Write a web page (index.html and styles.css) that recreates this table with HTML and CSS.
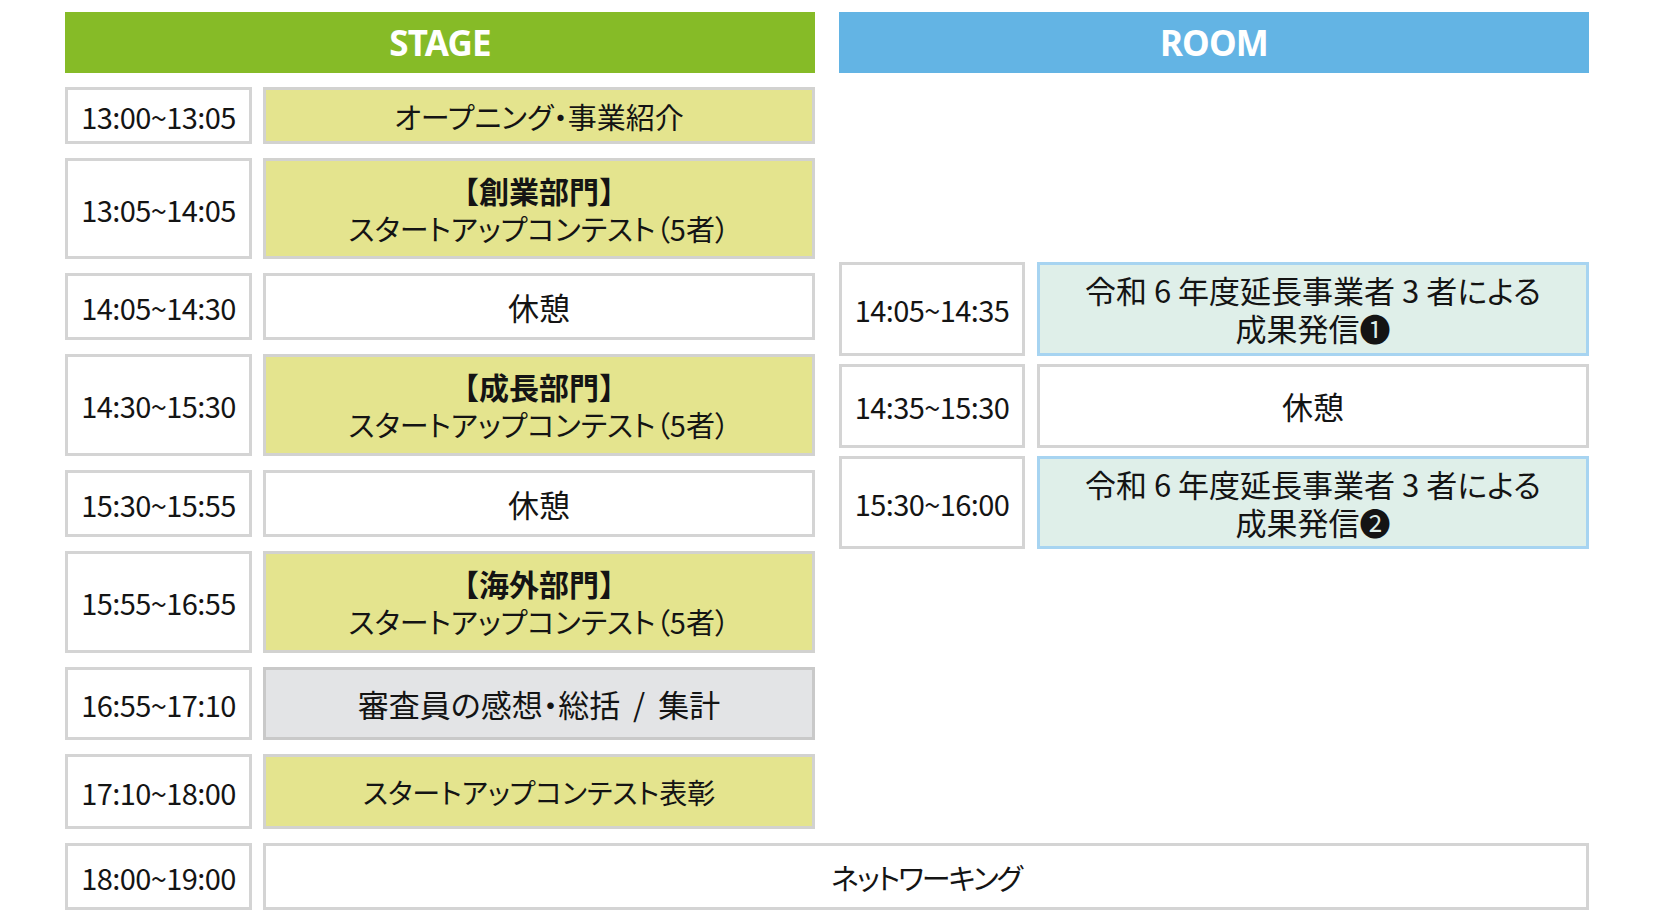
FILE: index.html
```html
<!DOCTYPE html>
<html lang="ja">
<head>
<meta charset="utf-8">
<title>Schedule</title>
<link rel="stylesheet" href="styles.css">
</head>
<body>
<div class="page">
  <div class="columns">
    <section class="col stage">
      <div class="head head-stage">STAGE</div>
      <div class="row h57"><div class="cell time">13:00~13:05</div><div class="cell yellow">オープニング・事業紹介</div></div>
      <div class="row h101"><div class="cell time">13:05~14:05</div><div class="cell yellow"><span class="bold">【創業部門】</span><span>スタートアップコンテスト（5者）</span></div></div>
      <div class="row h67"><div class="cell time">14:05~14:30</div><div class="cell plain kanji">休憩</div></div>
      <div class="row h102"><div class="cell time">14:30~15:30</div><div class="cell yellow"><span class="bold">【成長部門】</span><span>スタートアップコンテスト（5者）</span></div></div>
      <div class="row h67"><div class="cell time">15:30~15:55</div><div class="cell plain kanji">休憩</div></div>
      <div class="row h102"><div class="cell time">15:55~16:55</div><div class="cell yellow"><span class="bold">【海外部門】</span><span>スタートアップコンテスト（5者）</span></div></div>
      <div class="row h73"><div class="cell time">16:55~17:10</div><div class="cell gray">審査員の感想・総括 / 集計</div></div>
      <div class="row h75"><div class="cell time">17:10~18:00</div><div class="cell yellow award">スタートアップコンテスト表彰</div></div>
    </section>
    <section class="col room">
      <div class="head head-room">ROOM</div>
      <div class="room-rows">
        <div class="row room-row h94"><div class="cell time">14:05~14:35</div><div class="cell blue"><span>令和 6 年度延長事業者 3 者による</span><span>成果発信❶</span></div></div>
        <div class="row room-row h84"><div class="cell time">14:35~15:30</div><div class="cell plain kanji">休憩</div></div>
        <div class="row room-row h93"><div class="cell time">15:30~16:00</div><div class="cell blue"><span>令和 6 年度延長事業者 3 者による</span><span>成果発信❷</span></div></div>
      </div>
    </section>
  </div>
  <div class="row wide h67"><div class="cell time">18:00~19:00</div><div class="cell plain network">ネットワーキング</div></div>
</div>
</body>
</html>
```
FILE: styles.css
```css
html, body {
  margin: 0;
  padding: 0;
  background: #ffffff;
}
body {
  font-family: "Noto Sans CJK JP", "Noto Sans", sans-serif;
  color: #141414;
}
.page {
  width: 1524px;
  padding: 12px 0 0 65px;
  display: flex;
  flex-direction: column;
  gap: 14px;
}
.columns {
  display: flex;
  gap: 24px;
}
.col {
  width: 750px;
  display: flex;
  flex-direction: column;
  gap: 14px;
}
.head {
  height: 61px;
  display: flex;
  align-items: center;
  justify-content: center;
  color: #ffffff;
  font-family: "Noto Sans", "Open Sans", sans-serif;
  font-weight: 700;
  font-size: 35px;
  letter-spacing: -0.8px;
}
.head-stage { background: #86bb27; }
.head-room { background: #63b4e4; }
.row {
  display: grid;
  grid-template-columns: 187px 552px;
  column-gap: 11px;
}
.room-rows {
  margin-top: 175px;
  display: flex;
  flex-direction: column;
  gap: 8px;
}
.room-row {
  grid-template-columns: 186px 552px;
  column-gap: 12px;
}
.wide {
  grid-template-columns: 187px 1326px;
}
.h57 { height: 57px; }
.h67 { height: 67px; }
.h73 { height: 73px; }
.h75 { height: 75px; }
.h84 { height: 84px; }
.h93 { height: 93px; }
.h94 { height: 94px; }
.h101 { height: 101px; }
.h102 { height: 102px; }
.cell {
  box-sizing: border-box;
  border: 3px solid #d4d4d4;
  display: flex;
  flex-direction: column;
  align-items: center;
  justify-content: center;
  text-align: center;
  font-size: 29px;
  line-height: 38px;
  font-feature-settings: "palt";
  white-space: nowrap;
}
.kanji { font-size: 31px; }
.time {
  background: #ffffff;
  font-size: 29px;
  letter-spacing: -0.6px;
  font-feature-settings: normal;
}
.plain { background: #ffffff; }
.yellow { background: #e4e48e; border-color: #d2d2d0; }
.award { font-size: 28px; }
.network { letter-spacing: -2px; }
.gray {
  background: #e3e4e6;
  border-color: #c9c9c9;
  font-size: 31px;
  word-spacing: 6px;
}
.blue {
  background: #dfefe9;
  border-color: #a7d4f1;
  font-size: 31px;
}
.bold {
  font-weight: 700;
  font-size: 30px;
  font-feature-settings: normal;
}
```
